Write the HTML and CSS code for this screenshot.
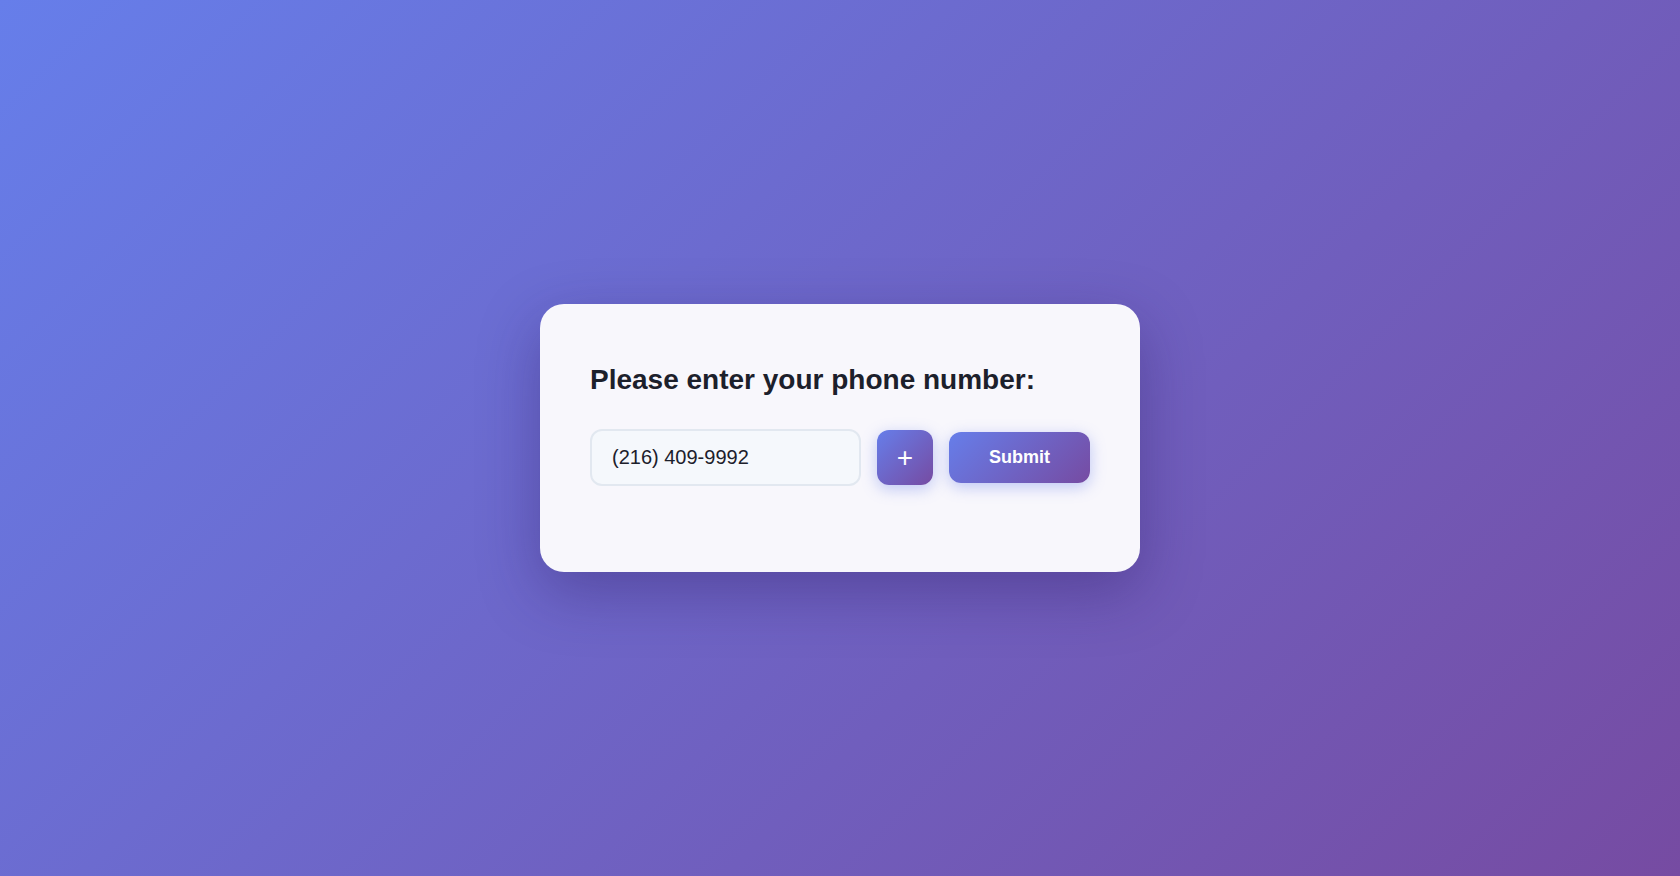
FILE: index.html
```html
<!DOCTYPE html>
<html lang="en">
<head>
<meta charset="utf-8">
<title>Phone number</title>
<link rel="stylesheet" href="styles.css">
</head>
<body>
  <main class="page">
    <form class="card" onsubmit="return false;">
      <h2 class="card-title">Please enter your phone number:</h2>
      <div class="entry-row">
        <input class="phone-input" type="text" value="(216) 409-9992" aria-label="Phone number">
        <button class="btn btn-add" type="button" aria-label="Add">+</button>
        <button class="btn btn-submit" type="submit">Submit</button>
      </div>
      <div class="status"></div>
    </form>
  </main>
</body>
</html>
```

FILE: styles.css
```css
* {
  box-sizing: border-box;
}

html, body {
  height: 100%;
}

body {
  margin: 0;
  font-family: "Liberation Sans", Arial, sans-serif;
  background: linear-gradient(135deg, #667eea 0%, #764ba2 100%);
}

.page {
  min-height: 100%;
  display: flex;
  align-items: center;
  justify-content: center;
}

.card {
  width: 600px;
  background: #f8f7fc;
  border-radius: 24px;
  padding: 60px 50px 0;
  box-shadow: 0 20px 60px rgba(40, 20, 90, 0.35);
}

.card-title {
  margin: 0 0 33px;
  font-size: 28px;
  font-weight: 700;
  color: #1c202b;
  line-height: 1.15;
}

.entry-row {
  display: flex;
  align-items: center;
  gap: 16px;
}

.phone-input {
  flex: 1;
  min-width: 0;
  height: 57px;
  padding: 0 20px;
  border: 2px solid #e2e8f0;
  border-radius: 12px;
  background: #f5f8fc;
  font-family: inherit;
  font-size: 20px;
  color: #1c202b;
  outline: none;
}

.btn {
  border: none;
  color: #ffffff;
  font-family: inherit;
  cursor: pointer;
  background: linear-gradient(135deg, #667eea 0%, #764ba2 100%);
  box-shadow: 0 4px 15px rgba(102, 126, 234, 0.4);
}

.btn-add {
  width: 56px;
  height: 55px;
  padding: 0;
  border-radius: 12px;
  font-size: 28px;
  line-height: 1;
}

.btn-submit {
  width: 141px;
  height: 51px;
  padding: 0;
  border-radius: 12px;
  font-size: 18px;
  font-weight: 700;
}

.status {
  height: 86px;
}
```
